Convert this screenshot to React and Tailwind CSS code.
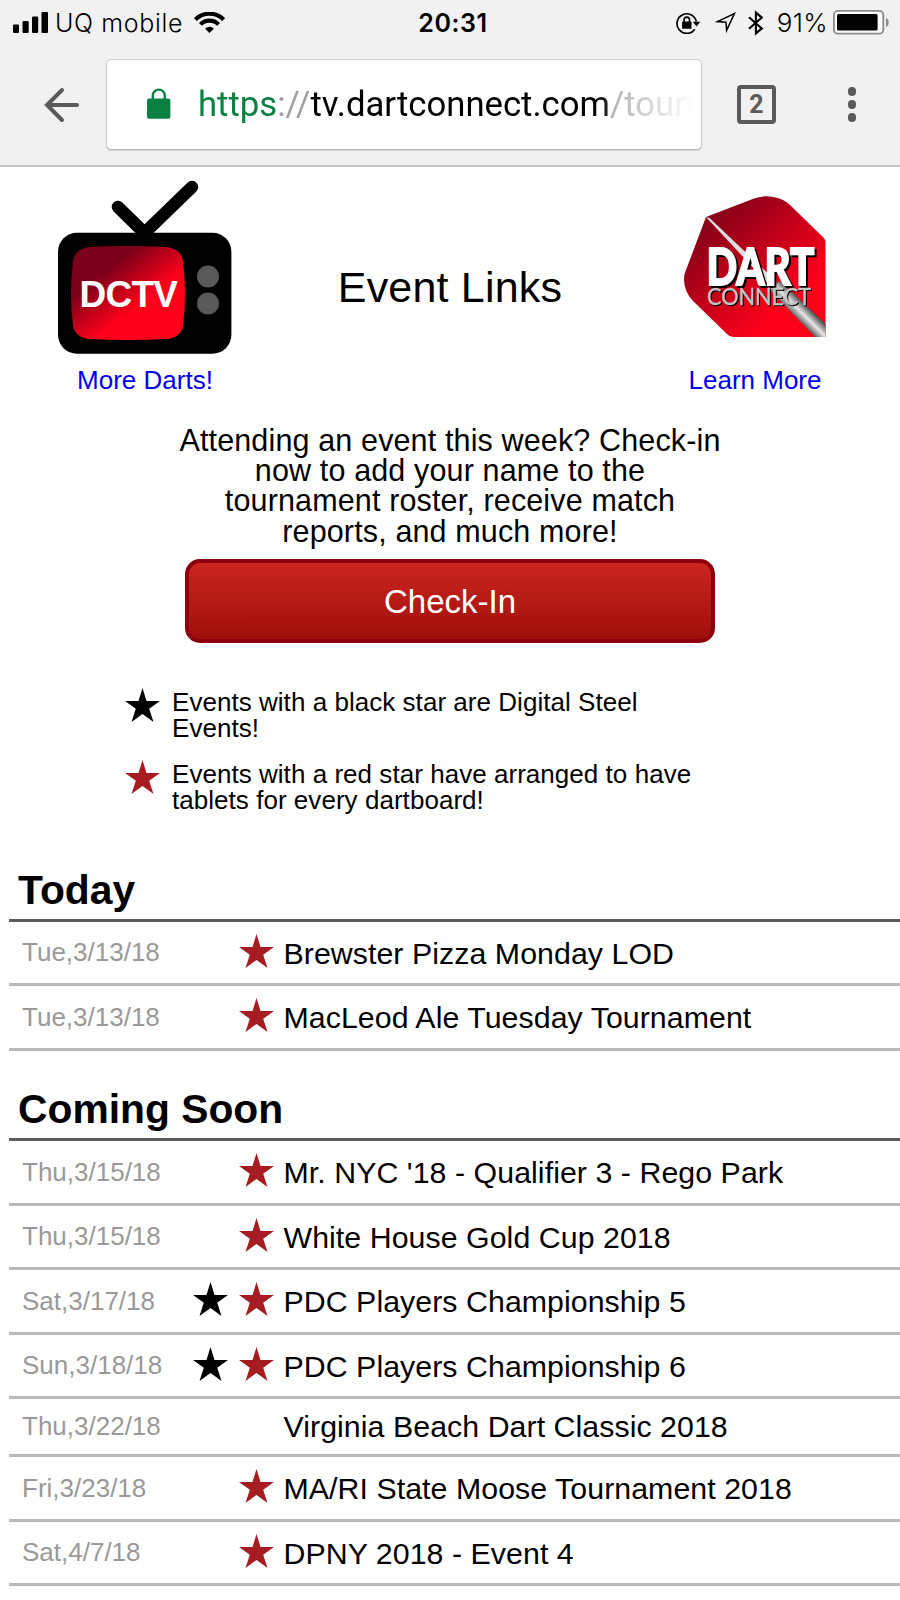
import React from 'react';

const TODAY = [
  { date: 'Tue,3/13/18', name: 'Brewster Pizza Monday LOD', red: true },
  { date: 'Tue,3/13/18', name: 'MacLeod Ale Tuesday Tournament', red: true },
];

const COMING_SOON = [
  { date: 'Thu,3/15/18', name: "Mr. NYC '18 - Qualifier 3 - Rego Park", red: true },
  { date: 'Thu,3/15/18', name: 'White House Gold Cup 2018', red: true },
  { date: 'Sat,3/17/18', name: 'PDC Players Championship 5', black: true, red: true },
  { date: 'Sun,3/18/18', name: 'PDC Players Championship 6', black: true, red: true },
  { date: 'Thu,3/22/18', name: 'Virginia Beach Dart Classic 2018' },
  { date: 'Fri,3/23/18', name: 'MA/RI State Moose Tournament 2018', red: true },
  { date: 'Sat,4/7/18', name: 'DPNY 2018 - Event 4', red: true },
];

// ────────────────────────────────────────────────────────────
// icons
// ────────────────────────────────────────────────────────────
const Star = ({ className }) => (
  <svg viewBox="0 0 35 34" className={className}>
    <path
      fill="currentColor"
      d="M17.5 0 L21.5 13 H35 L24.2 20.8 L28.5 34 L17.5 26 L6.5 34 L10.8 20.8 L0 13 H13.5 Z"
    />
  </svg>
);

const SignalIcon = () => (
  <svg width="35" height="21" viewBox="0 0 35 21">
    <rect x="0" y="12.5" width="6" height="8.5" rx="1" />
    <rect x="9.5" y="9" width="6.2" height="12" rx="1" />
    <rect x="19" y="4.5" width="6.2" height="16.5" rx="1" />
    <rect x="28.5" y="0" width="6.5" height="21" rx="1" />
  </svg>
);

const WifiIcon = () => (
  <svg width="31" height="21" viewBox="0 0 31 21" fill="none" stroke="#000">
    <path d="M1.4 7.6 A19.8 19.8 0 0 1 29.6 7.6" strokeWidth="4.1" />
    <path d="M6.4 12.4 A12.8 12.8 0 0 1 24.6 12.4" strokeWidth="4.1" />
    <path d="M15.5 21 L11.1 16.7 A6.2 6.2 0 0 1 19.9 16.7 Z" fill="#000" stroke="none" />
  </svg>
);

const RotationLockIcon = () => (
  <svg width="24" height="22" viewBox="0 0 24 22" fill="none" stroke="#000">
    <path d="M18.8 17.2 A9.8 9.8 0 1 1 20.3 9.4" strokeWidth="1.7" />
    <path d="M16.8 9.8 H24.2 L20.6 14.4 Z" fill="#000" stroke="none" />
    <rect x="6.1" y="9.6" width="9.4" height="7.2" rx="0.8" fill="#000" stroke="none" />
    <path d="M8.1 10 V7.8 A2.7 2.7 0 0 1 13.5 7.8 V10" strokeWidth="1.6" />
  </svg>
);

const LocationIcon = () => (
  <svg width="21" height="21" viewBox="0 0 21 21" fill="none" stroke="#000" strokeWidth="1.5">
    <path d="M19.4 1.6 L11.6 18.4 L11 10.2 L2.4 9.6 Z" strokeLinejoin="miter" />
  </svg>
);

const BluetoothIcon = () => (
  <svg width="16" height="26" viewBox="0 0 16 26" fill="none" stroke="#000" strokeWidth="2.1">
    <path d="M1 7.2 L13.8 18.4 L7.9 23.4 V2.6 L13.8 7.6 L1 18.8" />
  </svg>
);

const BatteryIcon = () => (
  <svg width="57" height="25" viewBox="0 0 57 25">
    <rect x="0.9" y="0.9" width="49.4" height="22.8" rx="4" fill="#fafafa" stroke="#8a8a8a" strokeWidth="1.8" />
    <rect x="4" y="4" width="40.6" height="16.4" rx="1.5" />
    <path d="M53 8 C56.6 9 56.6 16 53 17 Z" fill="#8a8a8a" />
  </svg>
);

const BackIcon = () => (
  <svg width="36" height="36" viewBox="0 0 36 36" fill="none" stroke="#5a5a5a" strokeWidth="4" strokeLinecap="round">
    <path d="M33 18 H3 M18 3 L3 18 L18 33" strokeLinejoin="miter" />
  </svg>
);

const LockIcon = () => (
  <svg width="24" height="31" viewBox="0 0 24 31" className="-mt-[2px]">
    <rect x="0" y="10.5" width="23.4" height="20.2" rx="2" fill="#0b8043" />
    <path d="M5.8 11 V7.6 A6 6 0 0 1 17.8 7.6 V11" fill="none" stroke="#0b8043" strokeWidth="2.4" />
  </svg>
);

// ────────────────────────────────────────────────────────────
// logos
// ────────────────────────────────────────────────────────────
const DctvLogo = () => (
  <svg width="174" height="174" viewBox="0 0 174 174">
    <defs>
      <linearGradient id="screen" x1="0.1" y1="0.1" x2="0.85" y2="0.9">
        <stop offset="0.24" stopColor="#7c0019" />
        <stop offset="0.66" stopColor="#ff001b" />
      </linearGradient>
    </defs>
    <path d="M60 27 L86.5 53 L134 7" fill="none" stroke="#000" strokeWidth="12.5" strokeLinecap="round" />
    <rect x="0" y="52.7" width="173.4" height="121" rx="19" />
    <path
      fill="url(#screen)"
      d="M31 67 Q70 65 109 67 Q123 69 125 81 Q129 113 125 146 Q123 157 109 159 Q70 161 31 159 Q17 157 15 146 Q11 113 15 81 Q17 69 31 67 Z"
    />
    <text x="21.5" y="127" fill="#fff" fontSize="37" fontWeight="bold" textLength="98.5" className="font-['Liberation_Sans',sans-serif]">
      DCTV
    </text>
    <circle cx="150" cy="96.5" r="11" fill="#595959" />
    <circle cx="150" cy="123.5" r="11" fill="#595959" />
  </svg>
);

const DartLogo = () => (
  <svg width="142" height="142" viewBox="0 0 142 142">
    <defs>
      <linearGradient id="flight" x1="0.1" y1="0.1" x2="0.85" y2="0.9">
        <stop offset="0.05" stopColor="#7f0018" />
        <stop offset="0.85" stopColor="#ff001b" />
      </linearGradient>
      <linearGradient id="barrel" gradientUnits="userSpaceOnUse" x1="112" y1="125" x2="126" y2="111">
        <stop offset="0" stopColor="#333" />
        <stop offset="0.5" stopColor="#e6e6e6" />
        <stop offset="1" stopColor="#333" />
      </linearGradient>
    </defs>
    <path
      fill="url(#flight)"
      d="M22 21 L70 2.5 Q83 -2.5 99 4 Q103 6 107 10 L139 41 Q141.5 43 141.5 47 V141 H49 Q46 141 43 138 L9 105 Q-2 93 0.5 78 Z"
    />
    <path d="M22 21 L25.5 22 L93 86 L88 92 Z" fill="#dedede" />
    <path d="M84 92 L97 85 L141.5 128 V141 H131 Z" fill="url(#barrel)" />
    <text
      x="22.5"
      y="88.5"
      fill="#fff"
      stroke="#fff"
      strokeWidth="1.8"
      fontSize="52"
      fontWeight="900"
      textLength="108"
      lengthAdjust="spacingAndGlyphs"
      className="font-['Lato',sans-serif] drop-shadow-[2px_2px_0px_#000]"
    >
      DART
    </text>
    <text
      x="23"
      y="108.5"
      fill="#c4c4c4"
      stroke="#c4c4c4"
      strokeWidth="0.4"
      fontSize="22.5"
      textLength="104"
      lengthAdjust="spacingAndGlyphs"
      className="font-['Lato',sans-serif] drop-shadow-[1.5px_1.5px_0px_#000]"
    >
      CONNECT
    </text>
  </svg>
);

// ────────────────────────────────────────────────────────────
// sections
// ────────────────────────────────────────────────────────────
const StatusBar = () => (
  <div className="h-[45px] pl-[13px] pr-[10px] grid grid-cols-[1fr_auto_1fr] items-center font-['Inter',sans-serif] text-[25px] leading-none">
    <div className="flex items-center">
      <SignalIcon />
      <span className="ml-[7px] mr-[11px] pt-px font-light tracking-[0.65px]">UQ mobile</span>
      <WifiIcon />
    </div>
    <span className="pl-[3px] pt-[2px] font-semibold tracking-[0.6px]">20:31</span>
    <div className="flex items-center justify-end">
      <RotationLockIcon />
      <span className="ml-[15px]"><LocationIcon /></span>
      <span className="ml-[12px]"><BluetoothIcon /></span>
      <span className="ml-[13px] mr-[5px] pt-px font-light text-[26px] tracking-[0.3px]">91%</span>
      <BatteryIcon />
    </div>
  </div>
);

const Toolbar = () => (
  <div className="h-[120px] pt-[14px] flex items-start">
    <div className="w-[106px] h-[91px] pl-[44px] flex items-center">
      <BackIcon />
    </div>
    <div className="w-[596px] h-[91px] pl-[40px] pr-[8px] flex items-center rounded-[5px] bg-white border border-[#cfcfcf] border-b-[#b5b5b5] shadow-[0_1px_1px_#d0d0d0]">
      <LockIcon />
      <div className="ml-[27px] -mt-[1px] flex-1 overflow-hidden whitespace-nowrap font-['Roboto',sans-serif] text-[34.7px] leading-[44px] mask-r-from-80% mask-r-to-100%">
        <span className="text-[#0b8043]">https</span>
        <span className="text-[#a0a0a0]">://</span>
        <span>tv.dartconnect.com</span>
        <span className="text-[#a0a0a0]">/tourn</span>
      </div>
    </div>
    <div className="ml-[35px] mt-[26px] w-[39px] h-[39px] flex items-center justify-center rounded-[4px] border-4 border-[#5a5a5a] text-[#5a5a5a] font-['Roboto',sans-serif] font-bold text-[25px] leading-none">
      2
    </div>
    <div className="ml-[71.5px] mt-[28px] flex flex-col gap-[4.5px]">
      <span className="size-[8.7px] rounded-full bg-[#5a5a5a]" />
      <span className="size-[8.7px] rounded-full bg-[#5a5a5a]" />
      <span className="size-[8.7px] rounded-full bg-[#5a5a5a]" />
    </div>
  </div>
);

const EventRow = ({ event }) => {
  const starred = event.black || event.red;

  return (
    <div
      className={`grid grid-cols-[184px_45.5px_45px_1fr] items-start border-b-[3px] border-[#bababa] ${
        starred ? 'h-[64.5px] pt-[12px]' : 'h-[58px] pt-[8px]'
      }`}
    >
      <span className="pl-[13px] pt-[3.5px] text-[26px] leading-[30px] text-[#999]">{event.date}</span>
      <span>{event.black && <Star className="w-[35px] h-[34px] text-black" />}</span>
      <span>{event.red && <Star className="w-[35px] h-[34px] text-[#a61c20]" />}</span>
      <span className="pt-[3px] text-[30.3px] leading-[34px] tracking-[0.06px] whitespace-nowrap">{event.name}</span>
    </div>
  );
};

const EventSection = ({ title, events, className }) => (
  <section className={className}>
    <h2 className="pl-[9px] h-[54px] text-[40.8px] leading-[44px] font-bold border-b-[3px] border-[#5c5c5c]">{title}</h2>
    {events.map((event, i) => (
      <EventRow key={i} event={event} />
    ))}
  </section>
);

function App() {
  return (
    <div className="w-[900px] h-[1600px] overflow-hidden bg-white text-black font-['Liberation_Sans',Arial,sans-serif]">
      {/* browser chrome */}
      <header className="h-[167px] bg-[#f1f1f1] border-b-2 border-[#c4c4c4]">
        <StatusBar />
        <Toolbar />
      </header>

      {/* logos and title */}
      <div className="px-[20px] pt-[13px] h-[248px] grid grid-cols-[250px_1fr_250px]">
        <div className="flex flex-col items-center">
          <DctvLogo />
          <a className="mt-[11px] text-[26px] leading-[30px] text-[#0000ee]">More Darts!</a>
        </div>
        <h1 className="pt-[83px] text-center text-[43px] leading-[48px] tracking-[0.2px]">Event Links</h1>
        <div className="pt-[16px] flex flex-col items-center">
          <DartLogo />
          <a className="mt-[27px] text-[26px] leading-[30px] text-[#0000ee]">Learn More</a>
        </div>
      </div>

      {/* check-in */}
      <div className="pt-[9.5px] flex flex-col items-center">
        <p className="w-[545px] text-center text-[30.5px] leading-[30.4px] tracking-[0.14px] whitespace-nowrap">
          Attending an event this week? Check-in
          <br />
          now to add your name to the
          <br />
          tournament roster, receive match
          <br />
          reports, and much more!
        </p>
        <button
          type="button"
          className="mt-[12.5px] w-[530px] h-[84px] pt-[2px] rounded-[15px] border-4 border-[#8c000e] bg-linear-to-b from-[#cb2520] to-[#a00f0b] text-white text-[33px] leading-none"
        >
          Check-In
        </button>
      </div>

      {/* legend */}
      <div className="mt-[45px] ml-[125px] flex flex-col gap-[20px] text-[26px] leading-[26px] tracking-[0.04px]">
        <div className="flex gap-[12px]">
          <Star className="w-[35px] h-[34px] text-black" />
          <p className="w-[535px] pt-px -mb-px">
            Events with a black star are Digital Steel
            <br />
            Events!
          </p>
        </div>
        <div className="flex gap-[12px]">
          <Star className="w-[35px] h-[34px] text-[#a61c20]" />
          <p className="w-[535px] pt-px -mb-px">
            Events with a red star have arranged to have
            <br />
            tablets for every dartboard!
          </p>
        </div>
      </div>

      {/* event lists */}
      <main className="ml-[9px]">
        <EventSection title="Today" events={TODAY} className="mt-[56px]" />
        <EventSection title="Coming Soon" events={COMING_SOON} className="mt-[36.5px]" />
      </main>
    </div>
  );
}

export default App;
